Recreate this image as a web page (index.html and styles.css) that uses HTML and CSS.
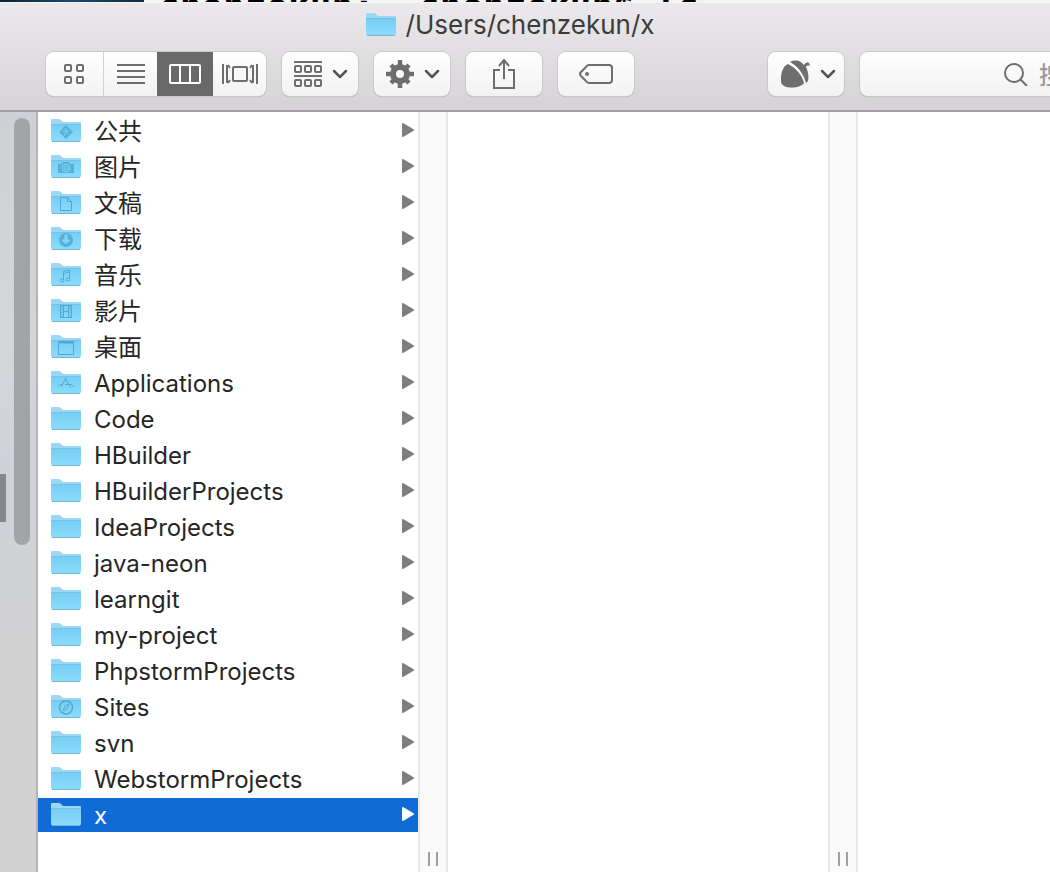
FILE: index.html
```
<!DOCTYPE html>
<html lang="zh-CN">
<head>
    <meta charset="UTF-8">
    <meta name="viewport" content="width=device-width, initial-scale=1.0">
    <title>/Users/chenzekun/x</title>
    <link rel="stylesheet" href="styles.css">
</head>
<body>
    <div class="terminal">
        <div class="wallpaper"></div>
        <div class="prompt">chenzekun:~ chenzekun$ ls</div>
    </div>

    <div class="window">
        <header class="titlebar">
            <h1 class="title">
                <svg class="folder" viewBox="0 0 30 24"><use href="#folder"/></svg>
                /Users/chenzekun/x
            </h1>
            <div class="toolbar">
                <div class="segments">
                    <button type="button" class="segment" aria-label="图标">
                        <svg width="22" height="22" viewBox="0 0 22 22" fill="none" stroke="#6e6e6e" stroke-width="2">
                            <rect x="1" y="2" width="6" height="6" rx="1"/><rect x="13" y="2" width="6" height="6" rx="1"/>
                            <rect x="1" y="14" width="6" height="6" rx="1"/><rect x="13" y="14" width="6" height="6" rx="1"/>
                        </svg>
                    </button>
                    <button type="button" class="segment" aria-label="列表">
                        <svg width="28" height="20" viewBox="0 0 28 20" stroke="#6e6e6e" stroke-width="2">
                            <path d="M0 1h28M0 7h28M0 13h28M0 19h28"/>
                        </svg>
                    </button>
                    <button type="button" class="segment active" aria-label="分栏">
                        <svg width="32" height="20" viewBox="0 0 32 20" fill="none" stroke="#fff" stroke-width="2">
                            <rect x="1" y="1" width="30" height="18" rx="1"/><path d="M11 1v18M21 1v18"/>
                        </svg>
                    </button>
                    <button type="button" class="segment" aria-label="Cover Flow">
                        <svg width="36" height="20" viewBox="0 0 36 20" fill="none" stroke="#6e6e6e" stroke-width="2">
                            <rect x="11" y="3" width="14" height="14" rx="1"/>
                            <path d="M1 0v20M35 0v20M5 1v18M31 1v18"/><path d="M6 1l2 3M6 19l2-3M30 1l-2 3M30 19l-2-3"/>
                        </svg>
                    </button>
                </div>
                <button type="button" class="tool menu" aria-label="排列">
                    <svg width="28" height="26" viewBox="0 0 28 26" fill="none" stroke="#6e6e6e" stroke-width="2">
                        <path d="M0 1h28M0 15h28"/>
                        <rect x="1" y="5" width="6" height="6" rx="1"/><rect x="11" y="5" width="6" height="6" rx="1"/><rect x="21" y="5" width="6" height="6" rx="1"/>
                        <rect x="1" y="19" width="6" height="6" rx="1"/><rect x="11" y="19" width="6" height="6" rx="1"/><rect x="21" y="19" width="6" height="6" rx="1"/>
                    </svg>
                    <svg class="chevron" viewBox="0 0 16 10"><use href="#chevron"/></svg>
                </button>
                <button type="button" class="tool menu" aria-label="操作">
                    <svg width="28" height="28" viewBox="-14 -14 28 28">
                        <circle r="7" fill="none" stroke="#6e6e6e" stroke-width="6"/>
                        <g stroke="#6e6e6e" stroke-width="4.500">
                            <path d="M0-14v6M0 14v-6M-14 0h6M14 0h-6"/>
                            <path d="M-9-9l3 3M9-9l-3 3M-9 9l3-3M9 9l-3-3"/>
                        </g>
                    </svg>
                    <svg class="chevron" viewBox="0 0 16 10"><use href="#chevron"/></svg>
                </button>
                <button type="button" class="tool" aria-label="共享">
                    <svg width="24" height="32" viewBox="0 0 24 32" fill="none" stroke="#6e6e6e" stroke-width="2">
                        <path d="M8 12H2v18h20V12h-6M12 21V2M7 8l5-6 5 6"/>
                    </svg>
                </button>
                <button type="button" class="tool" aria-label="标记">
                    <svg width="34" height="20" viewBox="0 0 34 20" fill="none" stroke="#6e6e6e" stroke-width="2">
                        <path d="M10 1h20q3 0 3 3v12q0 3-3 3H10q-2 0-4-3l-4-4q-2-2 0-4l4-4q2-3 4-3z"/><circle cx="8" cy="10" r="2" fill="#6e6e6e" stroke="none"/>
                    </svg>
                </button>
                <button type="button" class="tool menu tool-acorn" aria-label="Acorn">
                    <svg width="31" height="28" viewBox="0 0 31 28" fill="#6e6e6e">
                        <path d="M9 4C4 6 2 13 2 18c0 5 0 6 3 8 4 2 11 2 16 0 2-1 4-2 4-3C23 15 17 8 9 4z"/>
                        <path d="M11 2c6-3 11-1 14 3 1-2 3-3 5-2l1 3c-2-1-4 0-4 1 2 4 3 9 2 14l-2 2C25 15 20 7 11 2z"/>
                    </svg>
                    <svg class="chevron" viewBox="0 0 16 10"><use href="#chevron"/></svg>
                </button>
                <label class="search">
                    <svg width="24" height="24" viewBox="0 0 24 24" fill="none" stroke="#6e6e6e" stroke-width="2">
                        <circle cx="10" cy="11" r="9"/><path d="M16 17l7 7"/>
                    </svg>
                    <input type="search" placeholder="搜索" aria-label="搜索">
                </label>
            </div>
        </header>

        <main class="browser">
            <div class="gutter">
                <div class="thumb"></div>
                <div class="marker"></div>
            </div>
            <ul class="column files" id="files"></ul>
            <div class="divider"><span class="grip"></span></div>
            <div class="column"></div>
            <div class="divider"><span class="grip"></span></div>
            <div class="rest"></div>
        </main>
    </div>

    <svg class="symbols">
        <defs>
            <linearGradient id="blue" x1="0" y1="0" x2="0" y2="1">
                <stop offset="0" stop-color="#76cdf3"/>
                <stop offset="1" stop-color="#8adcfc"/>
            </linearGradient>
        </defs>
        <symbol id="folder" viewBox="0 0 30 24">
            <path d="M0 22V2q0-1 1-1h7q1 0 2 1 1 2 3 2h16q1 0 1 1v17z" fill="#9bd9f2"/>
            <path d="M0 6h30v16q0 1-1 1H1q-1 0-1-1z" fill="url(#blue)"/>
            <path d="M0 6.500h30" stroke="#74c3e6"/>
            <path d="M1 23.500h28" stroke="#79b4cd"/>
        </symbol>
        <symbol id="chevron" viewBox="0 0 16 10">
            <path d="M2 2l6 6 6-6" fill="none" stroke="#555" stroke-width="2.500" stroke-linecap="round" stroke-linejoin="round"/>
        </symbol>
    </svg>

    <script>
        // emblem drawn on the front of the special folders
        const emblems = {
            share: '<path d="M15 7l7 7-7 7-7-7z" fill="#51b2dd" stroke="none"/><path d="M15 10v4l-2 4M15 14l3 3M12 13h6" stroke="#86d4f4"/>',
            camera: '<path d="M7 10h4l1-2h6l1 2h4v9H7z" fill="#51b2dd" stroke="none"/><circle cx="15" cy="14" r="4" stroke="#86d4f4"/><circle cx="15" cy="14" r="2" stroke="#86d4f4"/>',
            page: '<path d="M9.500 7.500h7l4 4v9h-11zM16.500 7.500v4h4"/>',
            download: '<circle cx="15" cy="14" r="7" fill="#51b2dd" stroke="none"/><path d="M14 9h2v5h3l-4 4-4-4h3z" fill="#86d4f4" stroke="#86d4f4"/>',
            music: '<path d="M12.500 18V9.500l6-1.500v9M12.500 11.500l6-1.500"/><ellipse cx="11" cy="18.500" rx="2" ry="1.500"/><ellipse cx="17" cy="17.500" rx="2" ry="1.500"/>',
            film: '<path d="M9.500 7.500h11v12h-11zM12.500 7.500v12M17.500 7.500v12M12.500 13.500h5"/><path d="M11 8v12M19 8v12" stroke-dasharray="1 1"/>',
            desktop: '<path d="M7.500 7.500h15v13h-15z"/><path d="M7 8.500h16" stroke-width="2"/>',
            apps: '<path d="M15 8l-5 9M14 8l6 10M9 14.500h3M14 14.500h7M7 15l1 1M22 15l1 2"/>',
            compass: '<circle cx="15" cy="13.500" r="6.500" stroke-width="1.500"/><path d="M18 10l-2 5-4 2 2-5z"/>'
        };

        const files = [
            ['公共', 'share'], ['图片', 'camera'], ['文稿', 'page'], ['下载', 'download'],
            ['音乐', 'music'], ['影片', 'film'], ['桌面', 'desktop'], ['Applications', 'apps'],
            ['Code'], ['HBuilder'], ['HBuilderProjects'], ['IdeaProjects'], ['java-neon'],
            ['learngit'], ['my-project'], ['PhpstormProjects'], ['Sites', 'compass'],
            ['svn'], ['WebstormProjects'], ['x']
        ];

        document.getElementById('files').innerHTML = files.map(([name, emblem]) => `
            <li class="file${name === 'x' ? ' selected' : ''}">
                <svg class="folder" viewBox="0 0 30 24"><use href="#folder"/><g fill="none" stroke="#51a9d3">${emblems[emblem] || ''}</g></svg>
                <span class="name">${name}</span>
                <svg class="arrow" viewBox="0 0 12 14"><path d="M1 1l10 6-10 6z" fill="currentColor" stroke="currentColor" stroke-width="2" stroke-linejoin="round"/></svg>
            </li>`).join('');
    </script>
</body>
</html>
```
FILE: styles.css
```
body {
    margin: 0;
    height: 100vh;
    display: flex;
    flex-direction: column;
    overflow: hidden;
    background-color: white;
    font-family: Inter, "Noto Sans CJK SC", sans-serif;
    color: #262626;
}

/* sliver of the terminal behind the window */
.terminal {
    display: flex;
    flex: none;
    height: 2px;
    overflow: hidden;
    background-color: #f4f4f4;
}

.wallpaper {
    width: 144px;
    background: linear-gradient(to right, #0c2338, #1c4a6c, #0e2a44);
}

.prompt {
    padding-left: 14px;
    font: bold 36px/14px "DejaVu Sans Mono", monospace;
    color: black;
}

.window {
    flex: 1;
    min-height: 0;
    display: flex;
    flex-direction: column;
}

.titlebar {
    flex: none;
    box-sizing: border-box;
    height: 110px;
    border-bottom: 2px solid #9e9c9e;
    background: linear-gradient(#ebe9eb, #d5d3d5);
    box-shadow: inset 0 1px #f5f4f5;
}

.title {
    display: flex;
    justify-content: center;
    align-items: center;
    gap: 10px;
    margin: 0;
    padding-right: 30px;
    height: 44px;
    font-size: 26px;
    font-weight: 400;
    color: #3c3c3c;
}

.folder {
    width: 30px;
    height: 24px;
    flex: none;
}

.toolbar {
    display: flex;
    padding-left: 46px;
    margin-top: 6px;
    gap: 16px;
}

.segments,
.tool,
.search {
    box-sizing: border-box;
    flex: none;
    display: flex;
    height: 44px;
    border: 0;
    border-radius: 8px;
    background: linear-gradient(#ffffff, #f2f2f2);
    box-shadow: 0 0 0 1px #cac8ca, 0 1px 1px #a09ea0;
}

.segments {
    display: grid;
    grid-template-columns: 58px 53px 56px 53px;
    width: 220px;
    overflow: hidden;
}

.segment {
    display: flex;
    align-items: center;
    justify-content: center;
    padding: 0;
    border: 0;
    background: none;
}

.segment:first-child {
    border-right: 1px solid #d2d2d2;
}

.segment.active {
    background-color: #696969;
}

.tool {
    width: 76px;
    align-items: center;
    justify-content: center;
    gap: 10px;
    padding: 0;
}

.menu {
    padding-left: 2px;
}

.chevron {
    width: 16px;
    height: 10px;
}

.tool-acorn {
    margin-left: 118px;
}

.search {
    flex: 1;
    min-width: 0;
    align-items: center;
    gap: 11px;
    padding-left: 144px;
    border-radius: 8px 0 0 8px;
    overflow: hidden;
}

.search svg {
    flex: none;
}

.search input {
    flex: none;
    width: 160px;
    padding: 0;
    border: 0;
    outline: 0;
    background: none;
    font: 500 24px/36px "Noto Sans CJK SC", sans-serif;
}

.search input::placeholder {
    color: #9b9b9b;
}

.browser {
    flex: 1;
    min-height: 0;
    display: flex;
}

.gutter {
    position: relative;
    box-sizing: border-box;
    flex: none;
    width: 38px;
    padding: 6px 6px 0 14px;
    border-right: 2px solid #b4b4b6;
    background: linear-gradient(#cdd1d5, #d3d6d8 30%, #cfd2da 45%, #d2d2d3 70%);
}

.thumb {
    width: 16px;
    height: 427px;
    border-radius: 8px;
    background-color: #a2a4a6;
}

.marker {
    position: absolute;
    left: 0;
    top: 362px;
    width: 6px;
    height: 48px;
    background-color: #85878e;
}

.column {
    flex: none;
    width: 380px;
}

.files {
    box-sizing: border-box;
    display: flex;
    flex-direction: column;
    gap: 2px;
    margin: 0;
    padding: 2px 0 0;
    list-style: none;
}

.file {
    box-sizing: border-box;
    display: flex;
    align-items: center;
    height: 34px;
    padding: 0 4px 2px 13px;
    font-size: 24px;
    line-height: 34px;
}

.name {
    flex: 1;
    padding: 4px 0 0 13px;
}

.arrow {
    width: 12px;
    height: 14px;
    color: #7f7f7f;
}

.selected {
    background-color: #116bd7;
    color: white;
}

.selected .arrow {
    color: white;
}

.divider {
    box-sizing: border-box;
    flex: none;
    display: flex;
    align-items: flex-end;
    justify-content: center;
    width: 30px;
    padding-bottom: 6px;
    border: solid #e8e8e8;
    border-width: 0 2px;
    background-color: #fafafa;
}

.grip {
    width: 6px;
    height: 14px;
    border: solid #a0a0a0;
    border-width: 0 2px;
}

.rest {
    flex: 1;
}

.symbols {
    position: absolute;
    width: 0;
    height: 0;
}
```
